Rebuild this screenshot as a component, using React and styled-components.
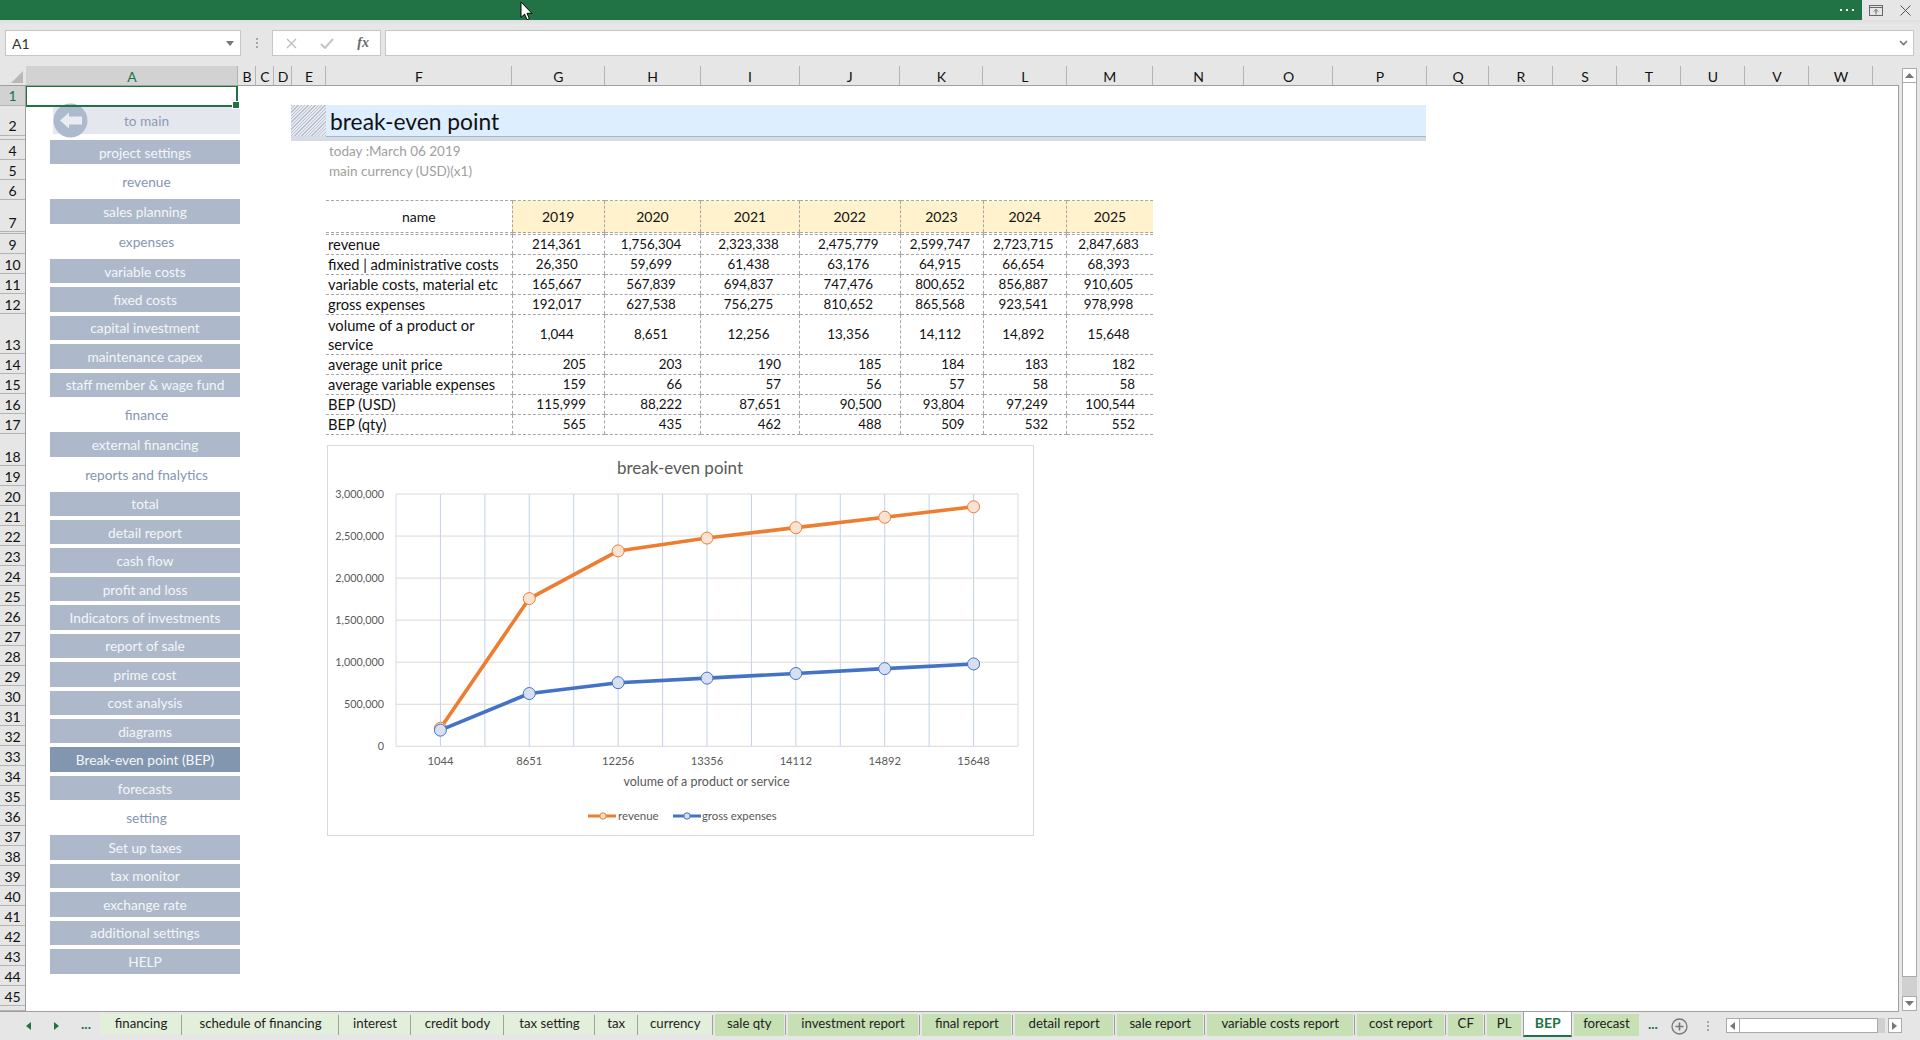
import React from 'react';
import styled, { createGlobalStyle } from 'styled-components';

const FONT = 'Lato, Carlito, "Open Sans", sans-serif';

const Global = createGlobalStyle`
  html, body { margin: 0; padding: 0; width: 1920px; height: 1040px; overflow: hidden; background: #e6e6e6; }
  * { box-sizing: border-box; }
  body { font-family: ${FONT}; color: #111; }
`;

const Page = styled.div`
  position: relative; width: 1920px; height: 1040px; display: flex; flex-direction: column; overflow: hidden;
`;
const TitleBar = styled.div`
  height: 20px; background: #217346; display: flex; justify-content: flex-end; align-items: stretch;
`;
const MoreDots = styled.div`
  display: flex; gap: 4px; align-items: center; margin-right: 8px;
`;
const WhiteDot = styled.span`
  width: 2px; height: 2px; background: #fff;
`;
const WindowControls = styled.div`
  width: 58px; background: #e6e6e6; display: flex; align-items: center; justify-content: space-between; padding: 0 9px 0 7px;
`;
const Cursor = styled.svg`
  position: absolute; left: 520px; top: 1px;
`;

const FormulaBar = styled.div`
  height: 46px; background: linear-gradient(#dedede 0, #e6e6e6 4px); display: flex; align-items: flex-start; padding: 10px 6px 0 5px;
`;
const Field = styled.div`
  height: 26px; background: #fff; border: 1px solid #c6c6c6; display: flex; align-items: center;
`;
const NameBox = styled(Field)`
  width: 236px; padding: 0 6px; justify-content: space-between; font-size: 14px; color: #333;
`;
const VDots = styled.div`
  width: 31px; display: flex; flex-direction: column; align-items: center; justify-content: center; gap: 2px; height: 26px;
`;
const VDot = styled.span`
  width: 2px; height: 2px; background: #a6a6a6;
`;
const FuncBox = styled(Field)`
  width: 109px; justify-content: space-between; padding: 0 11px 0 13px;
`;
const FxText = styled.span`
  font-family: "Liberation Serif", serif; font-style: italic; font-weight: 700; font-size: 14px; color: #6a6a6a;
`;
const FormulaInput = styled(Field)`
  flex: 1; margin-left: 4px; justify-content: flex-end; padding-right: 5px;
`;

const Workspace = styled.div`
  display: flex; height: 946px; background: #e6e6e6;
`;
const SheetArea = styled.div`
  width: 1899px; display: flex; flex-direction: column; border-bottom: 1px solid #9f9f9f;
`;
const ColumnRow = styled.div`
  height: 20px; display: flex; border-bottom: 1px solid #a0a0a0; background: #e6e6e6;
`;
const Corner = styled.div`
  width: 26px; display: flex; align-items: flex-end; justify-content: flex-end; padding: 0 3px 2px 0;
`;
const ColumnHead = styled.div`
  width: ${p => p.$w}px; flex: none; text-align: center; font-size: 14px; line-height: 21px; padding-left: 1px;
  border-right: 1px solid #b4b4b4; color: ${p => (p.$active ? '#217346' : '#111')};
  background: ${p => (p.$active ? '#d2d2d2' : 'transparent')};
`;
const Main = styled.div`
  flex: 1; display: flex; min-height: 0;
`;
const RowHeads = styled.div`
  width: 26px; flex: none; border-right: 1px solid #9f9f9f; overflow: hidden;
`;
const RowHead = styled.div`
  height: ${p => p.$h}px; border-bottom: 1px solid #b4b4b4; display: flex; align-items: flex-end; justify-content: center;
  font-size: 14px; line-height: ${p => (p.$raised ? 18 : 16)}px; overflow: hidden; color: ${p => (p.$active ? '#217346' : '#111')};
  background: ${p => (p.$active ? '#d2d2d2' : 'transparent')};
`;
const Sheet = styled.div`
  position: relative; flex: 1; background: #fff; border-right: 1px solid #a0a0a0; display: flex; align-items: flex-start; overflow: hidden;
`;
const Selection = styled.div`
  position: absolute; left: -1px; top: -1px; width: 213px; height: 22px; border: 2px solid #217346; z-index: 2;
  &::after { content: ''; position: absolute; right: -4px; bottom: -4px; width: 6px; height: 6px; background: #217346; border: 1px solid #fff; }
`;

const Sidebar = styled.nav`
  width: 190px; flex: none; margin-left: 24px; padding-top: 21px; display: flex; flex-direction: column; gap: 4px;
`;
const ToMain = styled.div`
  position: relative; margin-left: 3px; margin-bottom: 2px; height: 27px; background: #e4e8ee; color: #8c9ab2;
  display: flex; align-items: center; justify-content: center; font-size: 13.7px;
`;
const BackCircle = styled.svg`
  position: absolute; left: 0; top: -4px;
`;
const NavButton = styled.div`
  height: 24.45px; display: flex; align-items: center; justify-content: center; font-size: 13.7px;
  background: ${p => (p.$active ? '#8296b0' : '#adb9ca')}; color: #f4f6f9;
`;
const NavLabel = styled.div`
  height: 27px; display: flex; align-items: center; justify-content: center; font-size: 13.7px; color: #8496b0; padding-left: 3px;
`;

const Content = styled.div`
  margin-left: 51px; padding-top: 19px; display: flex; flex-direction: column; align-items: flex-start;
`;
const TitleBand = styled.div`
  width: 1135px; height: 36px; background: #d6dce4; display: flex; align-items: flex-start;
`;
const Hatch = styled.div`
  width: 35px; height: 31px; background: repeating-linear-gradient(135deg, #b9c1cf 0 .9px, #e6e9ef .9px 2.4px);
`;
const TitleText = styled.h1`
  flex: 1; height: 32px; margin: 0; background: #ddeeff; border-bottom: 1px solid #a9b5c5; padding-left: 4px;
  font-weight: 400; font-size: 22.8px; line-height: 32px; color: #111;
`;
const Meta = styled.div`
  margin-left: 38px; height: 20px; line-height: 20px; font-size: 13.5px; color: #a0a0a0;
`;
const MetaStack = styled.div`
  margin-bottom: 19px;
`;
const DataTable = styled.table`
  margin-left: 35px; width: 827px; table-layout: fixed; border-collapse: collapse; font-size: 14px; color: #111;
  td, th { padding: 0; border-bottom: 1px dashed #a6a6a6; line-height: 19px; font-weight: 400; }
  td + td, th + th { border-left: 1px dashed #a6a6a6; }
  thead th { border-top: 1px dashed #a6a6a6; height: 32px; text-align: center; }
`;
const YearHead = styled.th`
  background: #fff2cc;
`;
const ThinRow = styled.tr`
  td { height: 2px; line-height: 0; font-size: 0; }
`;
const DataRow = styled.tr`
  td { height: ${p => p.$h}px; }
`;
const NameCell = styled.td`
  padding-left: 2px !important; white-space: normal; font-size: 14.7px;
`;
const NumCell = styled.td`
  font-size: 13.4px;
  text-align: ${p => (p.$right ? 'right' : 'center')};
  padding-right: ${p => (p.$right ? 18 : 3)}px !important;
`;

const ChartFrame = styled.div`
  margin-left: 36px; margin-top: 10px; width: 707px; height: 391px; border: 1px solid #d9d9d9; background: #fff;
`;
const ChartSvg = styled.svg`
  display: block; font-family: ${FONT};
`;

const VScroll = styled.div`
  margin-left: 3px; width: 15px; padding-top: 2px; height: 945px; display: flex; flex-direction: column;
`;
const ScrollBtn = styled.div`
  flex: none; width: ${p => p.$w || 15}px; height: ${p => p.$h || 15}px; background: #fff; border: 1px solid #ababab; display: flex; align-items: center; justify-content: center;
`;
const VThumb = styled.div`
  height: 894px; background: #fff; border: 1px solid #ababab; border-top: 0;
`;
const VTrack = styled.div`
  flex: 1; background: #d0d0d0;
`;

const TabBar = styled.div`
  flex: 1; display: flex; align-items: flex-start; background: #e6e6e6;
`;
const TabNav = styled.div`
  width: 100px; flex: none; height: 28px; display: flex; align-items: center; padding-left: 26px; color: #217346; font-size: 10px;
`;
const NavArrow = styled.svg`
  margin-right: 23px; flex: none;
`;
const Ellipsis = styled.span`
  color: #217346; font-weight: 700; font-size: 14px; line-height: 1; margin-top: -4px; margin-left: -1px;
`;
const Tabs = styled.div`
  display: flex; align-items: flex-start; height: 28px;
`;
const Tab = styled.div`
  width: ${p => p.$w}px; flex: none; height: 25px; padding: ${p => (p.$dark ? '2px 2px 1px' : '2px 0 3px')}; position: relative;
  font-size: 13.2px; color: #222; text-align: center;
  ${p => (p.$last ? '' : `&::after { content: ''; position: absolute; right: 0; top: 3px; bottom: 2px; width: 1px; background: #a0a0a0; }`)}
`;
const TabFace = styled.div`
  height: 100%; line-height: 18px; white-space: nowrap; overflow: hidden; background: ${p => (p.$dark ? '#c6e0b4' : '#e2efda')};
`;
const ActiveTab = styled.div`
  width: 48.5px; flex: none; height: 25px; background: #fff; border: 1px solid #a0a0a0; border-top: 0; border-bottom: 2px solid #217346;
  text-align: center; font-size: 14px; font-weight: 700; color: #217346; line-height: 21px;
`;
const TabExtras = styled.div`
  display: flex; align-items: center; height: 28px; padding-left: 8px;
`;
const AddTab = styled.svg`
  margin: 0 5px 0 13px;
`;
const HScroll = styled.div`
  display: flex; align-items: center; margin-left: 2px; height: 15px; margin-top: 6px;
`;
const HThumb = styled.div`
  width: 138px; height: 15px; background: #fff; border: 1px solid #ababab; border-left: 0;
`;
const HTrack = styled.div`
  width: 7px; height: 15px; background: #d0d0d0; margin-right: 3px;
`;

const columns = [
  ['A', 212], ['B', 18], ['C', 18], ['D', 18], ['E', 34], ['F', 186], ['G', 92.5], ['H', 96], ['I', 99], ['J', 100.5], ['K', 83], ['L', 83.5],
  ['M', 86.5], ['N', 91], ['O', 89], ['P', 94], ['Q', 62], ['R', 64], ['S', 64], ['T', 64], ['U', 64], ['V', 64], ['W', 64],
];
const rowSpec = { 1: 20, 2: 30, 3: 4, 7: 32, 8: 2, 13: 40, 18: 32, 46: 5 };
const rows = Array.from({ length: 46 }, (_, i) => i + 1).map(n => ({
  n, h: rowSpec[n] || 20, label: n === 3 || n === 8 || n === 46 ? '' : n,
}));

const nav = [
  ['b', 'project settings'], ['l', 'revenue'], ['b', 'sales planning'], ['l', 'expenses'], ['b', 'variable costs'], ['b', 'fixed costs'],
  ['b', 'capital investment'], ['b', 'maintenance capex'], ['b', 'staff member & wage fund'], ['l', 'finance'], ['b', 'external financing'],
  ['l', 'reports and fnalytics'], ['b', 'total'], ['b', 'detail report'], ['b', 'cash flow'], ['b', 'profit and loss'],
  ['b', 'Indicators of investments'], ['b', 'report of sale'], ['b', 'prime cost'], ['b', 'cost analysis'], ['b', 'diagrams'],
  ['a', 'Break-even point (BEP)'], ['b', 'forecasts'], ['l', 'setting'], ['b', 'Set up taxes'], ['b', 'tax monitor'], ['b', 'exchange rate'],
  ['b', 'additional settings'], ['b', 'HELP'],
];

const years = [2019, 2020, 2021, 2022, 2023, 2024, 2025];
const colWidths = [186, 92.5, 96, 99, 100.5, 83, 83.5, 86.5];
const tableRows = [
  { name: 'revenue', vals: ['214,361', '1,756,304', '2,323,338', '2,475,779', '2,599,747', '2,723,715', '2,847,683'] },
  { name: 'fixed | administrative costs', vals: ['26,350', '59,699', '61,438', '63,176', '64,915', '66,654', '68,393'] },
  { name: 'variable costs, material etc', vals: ['165,667', '567,839', '694,837', '747,476', '800,652', '856,887', '910,605'] },
  { name: 'gross expenses', vals: ['192,017', '627,538', '756,275', '810,652', '865,568', '923,541', '978,998'] },
  { name: 'volume of a product or service', h: 40, vals: ['1,044', '8,651', '12,256', '13,356', '14,112', '14,892', '15,648'] },
  { name: 'average unit price', right: true, vals: ['205', '203', '190', '185', '184', '183', '182'] },
  { name: 'average variable expenses', right: true, vals: ['159', '66', '57', '56', '57', '58', '58'] },
  { name: 'BEP (USD)', right: true, vals: ['115,999', '88,222', '87,651', '90,500', '93,804', '97,249', '100,544'] },
  { name: 'BEP (qty)', right: true, vals: ['565', '435', '462', '488', '509', '532', '552'] },
];

const tabs = [
  ['financing', 82], ['schedule of financing', 157], ['interest', 72], ['credit body', 93], ['tax setting', 91], ['tax', 42.5], ['currency', 75.5],
];
const darkTabs = [
  ['sale qty', 72.7], ['investment report', 134.8], ['final report', 92.7], ['detail report', 101.8], ['sale report', 90.5],
  ['variable costs report', 149.5], ['cost report', 91.5], ['CF', 38.5], ['PL', 38.5],
];

/* chart geometry, in page coordinates */
const PL = 396, PR = 1018, PT = 495, PB = 747.3;
const cat = (PR - PL) / 7;
const cx = i => PL + cat * (i + 0.5);
const cy = v => PB - (v / 3000000) * (PB - PT);
const cats = ['1044', '8651', '12256', '13356', '14112', '14892', '15648'];
const revenue = [214361, 1756304, 2323338, 2475779, 2599747, 2723715, 2847683];
const gross = [192017, 627538, 756275, 810652, 865568, 923541, 978998];
const ticks = [0, 500000, 1000000, 1500000, 2000000, 2500000, 3000000];

function Series({ data, stroke, fill }) {
  return (
    <g>
      <polyline points={data.map((v, i) => `${cx(i)},${cy(v)}`).join(' ')} fill="none" stroke={stroke} strokeWidth="3.6" strokeLinejoin="round" />
      {data.map((v, i) => <circle key={i} cx={cx(i)} cy={cy(v)} r="6" fill={fill} stroke={stroke} strokeWidth="1" />)}
    </g>
  );
}

function Chart() {
  return (
    <ChartFrame>
      <ChartSvg width="705" height="389" viewBox="328 447 705 389">
        <text x="680" y="475" textAnchor="middle" fontSize="17" fill="#595959">break-even point</text>
        {Array.from({ length: 15 }, (_, i) => (
          <line key={i} x1={PL + (cat / 2) * i} x2={PL + (cat / 2) * i} y1={PT} y2={PB} stroke={i === 0 || i === 14 ? '#d4dbe8' : '#c3d1e9'} strokeWidth="1" />
        ))}
        {ticks.map(t => (
          <g key={t}>
            <line x1={PL} x2={PR} y1={cy(t)} y2={cy(t)} stroke="#d9d9d9" strokeWidth="1" />
            <text x="384" y={cy(t) + 4} textAnchor="end" fontSize="10.8" fill="#595959">{t.toLocaleString('en-US')}</text>
          </g>
        ))}
        {cats.map((c, i) => <text key={c} x={cx(i)} y="766" textAnchor="middle" fontSize="11.2" fill="#595959">{c}</text>)}
        <text x="706.5" y="787" textAnchor="middle" fontSize="12.5" fill="#595959">volume of a product or service</text>
        <Series data={revenue} stroke="#ed7d31" fill="#fbe3d3" />
        <Series data={gross} stroke="#4472c4" fill="#d6e0f2" />
        <line x1="588" x2="616" y1="817" y2="817" stroke="#ed7d31" strokeWidth="3" />
        <circle cx="603" cy="817" r="3.2" fill="#fbe3d3" stroke="#ed7d31" />
        <text x="618" y="821" fontSize="11.5" fill="#595959">revenue</text>
        <line x1="673" x2="701" y1="817" y2="817" stroke="#4472c4" strokeWidth="3" />
        <circle cx="687" cy="817" r="3.2" fill="#d6e0f2" stroke="#4472c4" />
        <text x="702" y="821" fontSize="11.3" fill="#595959">gross expenses</text>
      </ChartSvg>
    </ChartFrame>
  );
}

export default function App() {
  return (
    <Page>
      <Global />
      <TitleBar>
        <MoreDots><WhiteDot /><WhiteDot /><WhiteDot /></MoreDots>
        <WindowControls>
          <svg width="14" height="11" viewBox="0 0 14 11" fill="none" stroke="#666" strokeWidth="1">
            <rect x="0.5" y="0.5" width="13" height="10" />
            <line x1="0.5" y1="2.5" x2="13.5" y2="2.5" />
            <path d="M7 9.5V4.5M4.8 6.6L7 4.4l2.2 2.2" />
          </svg>
          <svg width="11" height="11" viewBox="0 0 11 11" fill="none" stroke="#555" strokeWidth="1">
            <path d="M0.5 0.5l10 10M10.5 0.5l-10 10" />
          </svg>
        </WindowControls>
      </TitleBar>
      <Cursor width="14" height="21" viewBox="0 0 14 21">
        <path d="M1 1v15.5l3.6-3.4 2.4 5.6 2.4-1-2.4-5.4h4.9z" fill="#fff" stroke="#000" strokeWidth="1" />
      </Cursor>

      <FormulaBar>
        <NameBox>
          A1
          <svg width="8" height="5" viewBox="0 0 8 5"><path d="M0 0h8L4 5z" fill="#777" /></svg>
        </NameBox>
        <VDots><VDot /><VDot /><VDot /></VDots>
        <FuncBox>
          <svg width="11" height="11" viewBox="0 0 11 11" fill="none" stroke="#bdbdbd" strokeWidth="1.3"><path d="M1 1l9 9M10 1l-9 9" /></svg>
          <svg width="14" height="11" viewBox="0 0 14 11" fill="none" stroke="#c4c4c4" strokeWidth="2"><path d="M1 6l4 4 8-9" /></svg>
          <FxText>fx</FxText>
        </FuncBox>
        <FormulaInput>
          <svg width="9" height="6" viewBox="0 0 9 6" fill="none" stroke="#777" strokeWidth="1.6"><path d="M1 1l3.5 3.5L8 1" /></svg>
        </FormulaInput>
      </FormulaBar>

      <Workspace>
        <SheetArea>
          <ColumnRow>
            <Corner>
              <svg width="12" height="12" viewBox="0 0 12 12"><path d="M12 0v12H0z" fill="#b9b9b9" /></svg>
            </Corner>
            {columns.map(([l, w]) => <ColumnHead key={l} $w={w} $active={l === 'A'}>{l}</ColumnHead>)}
          </ColumnRow>
          <Main>
            <RowHeads>
              {rows.map(r => <RowHead key={r.n} $h={r.h} $active={r.n === 1} $raised={r.n <= 2}>{r.label}</RowHead>)}
            </RowHeads>
            <Sheet>
              <Selection />
              <Sidebar>
                <ToMain>
                  <BackCircle width="36" height="36" viewBox="0 0 36 36">
                    <circle cx="17.5" cy="17.5" r="17" fill="#adb9cc" />
                    <path d="M7 17.5L16 9.5v4h13v8H16v4z" fill="#e9edf3" />
                  </BackCircle>
                  <span>to main</span>
                </ToMain>
                {nav.map(([k, t]) => (k === 'l'
                  ? <NavLabel key={t}>{t}</NavLabel>
                  : <NavButton key={t} $active={k === 'a'}>{t}</NavButton>))}
              </Sidebar>
              <Content>
                <TitleBand>
                  <Hatch />
                  <TitleText>break-even point</TitleText>
                </TitleBand>
                <MetaStack>
                  <Meta>today :March 06 2019</Meta>
                  <Meta>main currency (USD)(x1)</Meta>
                </MetaStack>
                <DataTable>
                  <colgroup>
                    {colWidths.map((w, i) => <col key={i} style={{ width: w }} />)}
                  </colgroup>
                  <thead>
                    <tr>
                      <th>name</th>
                      {years.map(y => <YearHead key={y}>{y}</YearHead>)}
                    </tr>
                  </thead>
                  <tbody>
                    <ThinRow>{colWidths.map((_, i) => <td key={i} />)}</ThinRow>
                    {tableRows.map(r => (
                      <DataRow key={r.name} $h={r.h || 19}>
                        <NameCell>{r.name}</NameCell>
                        {r.vals.map((v, i) => <NumCell key={i} $right={r.right}>{v}</NumCell>)}
                      </DataRow>
                    ))}
                  </tbody>
                </DataTable>
                <Chart />
              </Content>
            </Sheet>
          </Main>
        </SheetArea>
        <VScroll>
          <ScrollBtn>
            <svg width="9" height="5" viewBox="0 0 9 5"><path d="M4.5 0L9 5H0z" fill="#777" /></svg>
          </ScrollBtn>
          <VThumb />
          <VTrack />
          <ScrollBtn>
            <svg width="9" height="5" viewBox="0 0 9 5"><path d="M0 0h9L4.5 5z" fill="#777" /></svg>
          </ScrollBtn>
        </VScroll>
      </Workspace>

      <TabBar>
        <TabNav>
          <NavArrow width="5" height="8" viewBox="0 0 5 8"><path d="M5 0v8L0 4z" fill="#217346" /></NavArrow>
          <NavArrow width="5" height="8" viewBox="0 0 5 8"><path d="M0 0v8l5-4z" fill="#217346" /></NavArrow>
          <Ellipsis>...</Ellipsis>
        </TabNav>
        <Tabs>
          {tabs.map(([t, w]) => <Tab key={t} $w={w}><TabFace>{t}</TabFace></Tab>)}
          {darkTabs.map(([t, w], i) => <Tab key={t} $w={w} $dark $last={i === darkTabs.length - 1}><TabFace $dark>{t}</TabFace></Tab>)}
          <ActiveTab>BEP</ActiveTab>
          <Tab $w={69} $dark $last><TabFace $dark>forecast</TabFace></Tab>
        </Tabs>
        <TabExtras>
          <Ellipsis>...</Ellipsis>
          <AddTab width="17" height="17" viewBox="0 0 17 17" fill="none" stroke="#777" strokeWidth="1.3">
            <circle cx="8.5" cy="8.5" r="7.5" />
            <path d="M8.5 4.5v8M4.5 8.5h8" strokeWidth="1.6" />
          </AddTab>
          <VDots><VDot /><VDot /><VDot /></VDots>
        </TabExtras>
        <HScroll>
          <ScrollBtn $w={14}>
            <svg width="5" height="8" viewBox="0 0 5 8"><path d="M5 0v8L0 4z" fill="#777" /></svg>
          </ScrollBtn>
          <HThumb />
          <HTrack />
          <ScrollBtn $w={14}>
            <svg width="5" height="8" viewBox="0 0 5 8"><path d="M0 0v8l5-4z" fill="#777" /></svg>
          </ScrollBtn>
        </HScroll>
      </TabBar>
    </Page>
  );
}
